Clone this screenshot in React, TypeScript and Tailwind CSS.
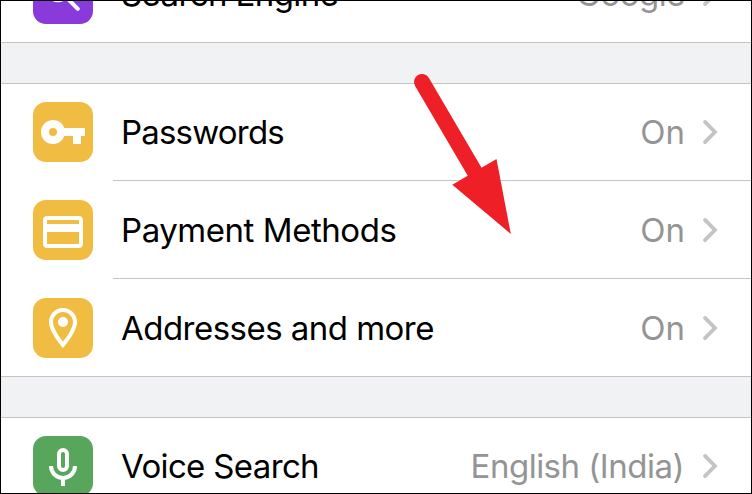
import type { ReactNode } from "react";

function IconTile({ color, children }: { color: string; children: ReactNode }) {
  return (
    <div className={`flex h-[60px] w-[60px] shrink-0 items-center justify-center rounded-[13px] ${color}`}>
      <svg viewBox="0 0 24 24" className="h-12 w-12 overflow-visible" fill="white">
        {children}
      </svg>
    </div>
  );
}

const SearchGlyph = (
  <g fill="none" stroke="white" strokeWidth="2">
    <circle cx="9.5" cy="9.5" r="5.6" />
    <path d="M13.5 13.5 19.4 19.4" strokeLinecap="round" />
  </g>
);

const KeyGlyph = (
  <path
    fillRule="evenodd"
    d="M12.65 10A6 6 0 1 0 12.65 14H17v4h4v-4h2v-4H12.65ZM7 14a2 2 0 1 1 0-4 2 2 0 0 1 0 4Z"
  />
);

const CardGlyph = (
  <path
    fillRule="evenodd"
    transform="translate(0 1)"
    d="M20 4H4c-1.11 0-1.99.89-1.99 2L2 18c0 1.11.89 2 2 2h16c1.11 0 2-.89 2-2V6c0-1.11-.89-2-2-2Zm0 14H4v-6h16v6Zm0-10H4V6h16v2Z"
  />
);

const PinGlyph = (
  <>
    <path
      fillRule="evenodd"
      d="M12 2C8.13 2 5 5.13 5 9c0 5.25 7 13 7 13s7-7.75 7-13c0-3.87-3.13-7-7-7ZM7 9c0-2.76 2.24-5 5-5s5 2.24 5 5c0 2.88-2.88 7.19-5 9.88C9.92 16.21 7 11.85 7 9Z"
    />
    <circle cx="12" cy="9" r="2.5" />
  </>
);

const MicGlyph = (
  <g fill="none" stroke="white" strokeWidth="2" transform="translate(0 1)">
    <rect x="10" y="3" width="4" height="10" rx="2" />
    <path d="M6 11a6 6 0 0 0 12 0M12 17v4" />
  </g>
);

function Chevron() {
  return (
    <svg
      viewBox="0 0 16 26"
      className="ml-[17px] h-[26px] w-4 shrink-0"
      fill="none"
      stroke="#c4c4c6"
      strokeWidth="3.8"
      strokeLinecap="round"
      strokeLinejoin="miter"
    >
      <path d="M3 2.9 12.9 13 3 23.1" />
    </svg>
  );
}

type RowProps = {
  icon: ReactNode;
  color: string;
  label: string;
  value: string;
  labelClass?: string;
  valueClass?: string;
  rowClass: string;
  divider?: boolean;
};

function Row({ icon, color, label, value, labelClass = "", valueClass = "", rowClass, divider }: RowProps) {
  return (
    <div className={`flex shrink-0 items-start pl-8 ${rowClass}`}>
      <IconTile color={color}>{icon}</IconTile>
      <div className="ml-5 flex h-full flex-1 flex-col justify-between self-stretch">
        <div className="flex h-[60px] items-center pr-[33px] pl-2">
          <span className={`whitespace-nowrap text-black ${labelClass}`}>{label}</span>
          <span className={`ml-auto whitespace-nowrap text-[#949496] ${valueClass}`}>{value}</span>
          <Chevron />
        </div>
        {divider && <div className="h-px bg-[#c4c4c6]" />}
      </div>
    </div>
  );
}

export default function App() {
  return (
    <div className="relative flex h-[494px] w-[752px] flex-col overflow-hidden border border-black bg-white font-['Inter',sans-serif] text-[33px] leading-[60px]">
      <section className="flex h-[42px] shrink-0 flex-col justify-end overflow-hidden border-b border-[#c4c4c6]">
        <Row
          rowClass="h-24 pt-[18px]"
          color="bg-[#8a3adb]"
          icon={SearchGlyph}
          label="Search Engine"
          value="Google"
          labelClass="tracking-[-0.6px]"
          valueClass="tracking-[-0.5px]"
        />
      </section>
      <div className="h-10 shrink-0 bg-[#f1f2f4]" />
      <section className="shrink-0 border-y border-[#c4c4c6]">
        <Row
          rowClass="h-[97px] pt-[18px]"
          color="bg-[#f1bc42]"
          icon={KeyGlyph}
          label="Passwords"
          value="On"
          labelClass="tracking-[-0.8px]"
          divider
        />
        <Row
          rowClass="h-[98px] pt-[19px]"
          color="bg-[#f1bc42]"
          icon={CardGlyph}
          label="Payment Methods"
          value="On"
          labelClass="tracking-[-0.45px]"
          divider
        />
        <Row
          rowClass="h-[97px] pt-[19px]"
          color="bg-[#f1bc42]"
          icon={PinGlyph}
          label="Addresses and more"
          value="On"
          labelClass="tracking-[-0.53px]"
        />
      </section>
      <div className="h-10 shrink-0 bg-[#f1f2f4]" />
      <section className="min-h-0 flex-1 overflow-hidden border-t border-[#c4c4c6]">
        <Row
          rowClass="h-[97px] pt-[18px]"
          color="bg-[#58a65c]"
          icon={MicGlyph}
          label="Voice Search"
          value="English (India)"
          labelClass="tracking-[-0.65px]"
          valueClass="mr-px tracking-[-0.5px]"
        />
      </section>
      <svg
        viewBox="0 0 104 168"
        className="pointer-events-none absolute top-[69px] left-[409px] h-[168px] w-[104px]"
        fill="#ef1f27"
      >
        <path d="M12 12 66 104" stroke="#ef1f27" strokeWidth="16" strokeLinecap="round" />
        <path d="M86.5 89 42.3 114.7 100.8 164Z" />
      </svg>
    </div>
  );
}
